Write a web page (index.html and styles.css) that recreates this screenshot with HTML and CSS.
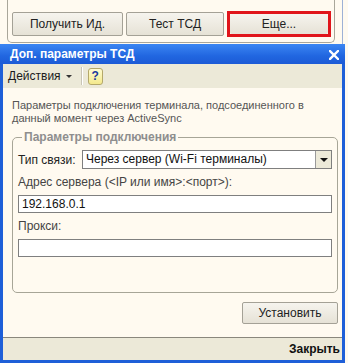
FILE: index.html
```html
<!DOCTYPE html>
<html lang="ru">

<head>
    <meta charset="UTF-8">
    <title>Доп. параметры ТСД</title>
    <link rel="stylesheet" href="styles.css">
</head>

<body>

    <!-- окно-владелец -->
    <div class="owner">
        <div class="owner-panel">
            <button class="btn btn-get">Получить Ид.</button>
            <button class="btn btn-test">Тест ТСД</button>
            <span class="mark"><button class="btn btn-more">Еще...</button></span>
        </div>
        <div class="owner-edge"></div>
    </div>

    <!-- диалог -->
    <div class="dialog">
        <div class="titlebar">
            <span class="title">Доп. параметры ТСД</span>
            <svg class="close" width="10" height="10" viewBox="0 0 10 10">
                <path d="M1 1 L9 9 M9 1 L1 9" stroke="#fff" stroke-width="2.4" stroke-linecap="square" />
            </svg>
        </div>

        <div class="toolbar">
            <span class="menu">Действия <span class="caret"></span></span>
            <span class="sep"></span>
            <span class="help">?</span>
        </div>

        <div class="content">
            <p class="hint">Параметры подключения терминала, подсоединенного в<br>данный момент через ActiveSync</p>

            <fieldset class="group">
                <legend>Параметры подключения</legend>

                <div class="row">
                    <label class="label-type">Тип связи:</label>
                    <div class="select">
                        <span class="select-value">Через сервер (Wi-Fi терминалы)</span>
                        <span class="select-btn"><span class="tri"></span></span>
                    </div>
                </div>

                <label class="label">Адрес сервера (&lt;IP или имя&gt;:&lt;порт&gt;):</label>
                <div class="input">192.168.0.1</div>

                <label class="label">Прокси:</label>
                <div class="input"></div>
            </fieldset>

            <div class="actions">
                <button class="btn btn-set">Установить</button>
            </div>
        </div>

        <div class="footer">
            <span class="close-link">Закрыть</span>
        </div>
    </div>

</body>

</html>
```

FILE: styles.css
```css
body {
    margin: 0;
    width: 348px;
    height: 363px;
    overflow: hidden;
    background-color: #fffaf0;
    font-family: "Liberation Sans", Arial, sans-serif;
    font-size: 11px;
    color: #333333;
}

.owner {
    height: 44px;
    display: flex;
}

.owner-panel {
    box-sizing: border-box;
    margin-left: 7px;
    width: 328px;
    height: 43px;
    border: 1px solid #a9a69a;
    border-top: none;
    border-radius: 0 0 5px 5px;
    display: flex;
    align-items: flex-end;
    gap: 3px;
    padding: 0 0 6px 4px;
}

.owner-edge {
    margin-left: 7px;
    width: 1px;
    height: 44px;
    background-color: #9db1d6;
}

.btn {
    box-sizing: border-box;
    height: 24px;
    border: 1px solid #a4a196;
    border-radius: 2px;
    background: linear-gradient(#f6f4ee, #e6e2d6);
    font-family: "Liberation Sans", Arial, sans-serif;
    font-size: 12px;
    color: #222222;
    padding: 0;
}

.btn-get {
    width: 111px;
}

.btn-test {
    width: 98px;
}

.mark {
    box-sizing: border-box;
    width: 104px;
    height: 26px;
    margin-bottom: -1px;
    border: 3px solid #e0151b;
    display: flex;
}

.btn-more {
    width: 98px;
    height: 20px;
    border: none;
}

/* диалог */
.dialog {
    box-sizing: border-box;
    width: 345px;
    height: 319px;
    border: 3px solid #1e5fd8;
    border-top: none;
    display: flex;
    flex-direction: column;
    background-color: #fffaf0;
}

.titlebar {
    height: 20px;
    margin: 0 -3px;
    padding: 0 6px 0 10px;
    background: linear-gradient(#3c86f2, #2166e0 60%, #1c5ad6);
    display: flex;
    align-items: center;
    justify-content: space-between;
}

.title {
    color: #ffffff;
    font-weight: bold;
    font-size: 12px;
}

.close {
    margin-top: 1px;
}

.toolbar {
    height: 24px;
    background-color: #ece9d8;
    display: flex;
    align-items: center;
    padding-left: 5px;
}

.menu {
    color: #1a1a1a;
    font-size: 12px;
    display: flex;
    align-items: center;
}

.caret {
    margin-left: 5px;
    margin-top: 1px;
    border-left: 3px solid transparent;
    border-right: 3px solid transparent;
    border-top: 3px solid #333333;
}

.sep {
    width: 1px;
    height: 18px;
    margin: 0 5px 0 9px;
    background-color: #c9c5b5;
    border-right: 1px solid #ffffff;
}

.help {
    box-sizing: border-box;
    width: 15px;
    height: 17px;
    border: 1px solid #b4a86a;
    border-radius: 3px;
    background: linear-gradient(#fffbd0, #f4e98c);
    color: #1d3c9e;
    font-weight: bold;
    font-size: 12px;
    text-align: center;
    line-height: 15px;
}

.content {
    flex: 1;
    padding: 11px 4px 0 9px;
    display: flex;
    flex-direction: column;
}

.hint {
    margin: 0;
    line-height: 13px;
    color: #555555;
}

.group {
    margin: 5px 0 0 0;
    padding: 6px 5px 0 5px;
    height: 163px;
    box-sizing: border-box;
    border: 1px solid #a7a597;
    border-radius: 5px;
}

.group legend {
    margin-left: 4px;
    padding: 0 2px;
    font-size: 12px;
    font-weight: bold;
    color: #8e8e8e;
}

.row {
    display: flex;
    align-items: center;
}

.label-type {
    width: 64px;
    font-size: 12px;
    color: #222222;
}

.select {
    box-sizing: border-box;
    flex: 1;
    height: 19px;
    border: 1px solid #7f7f7f;
    background-color: #ffffff;
    display: flex;
}

.select-value {
    flex: 1;
    padding-left: 3px;
    line-height: 17px;
    color: #111111;
    font-size: 12px;
}

.select-btn {
    width: 15px;
    border-left: 1px solid #9a9a9a;
    background-color: #ece9d8;
    display: flex;
    align-items: center;
    justify-content: center;
}

.tri {
    border-left: 4px solid transparent;
    border-right: 4px solid transparent;
    border-top: 4px solid #111111;
}

.label {
    display: block;
    margin-top: 6px;
    line-height: 14px;
    color: #444444;
    font-size: 12px;
}

.input {
    box-sizing: border-box;
    height: 18px;
    margin-top: 6px;
    border: 1px solid #7f7f7f;
    background-color: #ffffff;
    padding-left: 3px;
    line-height: 16px;
    color: #111111;
    font-size: 12px;
}

.actions {
    display: flex;
    justify-content: flex-end;
    margin-top: 9px;
}

.btn-set {
    width: 96px;
    height: 22px;
}

.footer {
    height: 22px;
    border-top: 1px solid #8a877c;
    background-color: #ece9d8;
    display: flex;
    align-items: center;
    justify-content: flex-end;
    padding-right: 2px;
}

.close-link {
    font-weight: bold;
    font-size: 12px;
    color: #111111;
}
```
